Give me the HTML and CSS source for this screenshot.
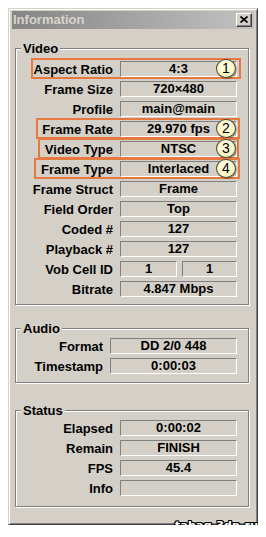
FILE: index.html
```html
<!DOCTYPE html>
<html lang="en">
<head>
    <meta charset="UTF-8">
    <meta name="viewport" content="width=device-width, initial-scale=1.0">
    <title>Information</title>
    <link rel="stylesheet" href="styles.css">
</head>
<body>
    <div class="window">
        <div class="title-bar">
            <span class="title">Information</span>
            <div class="close-btn">
                <svg width="8" height="7" viewBox="0 0 8 7"><path d="M0.5 0.5 L7.5 6.5 M7.5 0.5 L0.5 6.5" stroke="#000" stroke-width="1.6" fill="none"/></svg>
            </div>
        </div>

        <fieldset class="group group-video">
            <legend>Video</legend>
            <div class="row mark m1"><span class="label">Aspect Ratio</span><span class="field">4:3</span><span class="badge">1</span></div>
            <div class="row"><span class="label">Frame Size</span><span class="field">720×480</span></div>
            <div class="row"><span class="label">Profile</span><span class="field">main@main</span></div>
            <div class="row mark m2"><span class="label">Frame Rate</span><span class="field">29.970 fps</span><span class="badge">2</span></div>
            <div class="row mark m3"><span class="label">Video Type</span><span class="field">NTSC</span><span class="badge">3</span></div>
            <div class="row mark m4"><span class="label">Frame Type</span><span class="field">Interlaced</span><span class="badge">4</span></div>
            <div class="row"><span class="label">Frame Struct</span><span class="field">Frame</span></div>
            <div class="row"><span class="label">Field Order</span><span class="field">Top</span></div>
            <div class="row"><span class="label">Coded #</span><span class="field">127</span></div>
            <div class="row"><span class="label">Playback #</span><span class="field">127</span></div>
            <div class="row"><span class="label">Vob Cell ID</span>
                <div class="split"><span class="field">1</span><span class="field">1</span></div>
            </div>
            <div class="row"><span class="label">Bitrate</span><span class="field">4.847 Mbps</span></div>
        </fieldset>

        <fieldset class="group group-audio">
            <legend>Audio</legend>
            <div class="row"><span class="label">Format</span><span class="field">DD 2/0 448</span></div>
            <div class="row"><span class="label">Timestamp</span><span class="field">0:00:03</span></div>
        </fieldset>

        <fieldset class="group group-status">
            <legend>Status</legend>
            <div class="row"><span class="label">Elapsed</span><span class="field">0:00:02</span></div>
            <div class="row"><span class="label">Remain</span><span class="field">FINISH</span></div>
            <div class="row"><span class="label">FPS</span><span class="field">45.4</span></div>
            <div class="row"><span class="label">Info</span><span class="field"></span></div>
        </fieldset>
    </div>
    <div class="watermark">tahag.3dn.ru</div>
</body>
</html>
```

FILE: styles.css
```css
* {
    margin: 0;
    padding: 0;
    box-sizing: border-box;
}
body {
    margin: 8px;
    background-color: #fff;
    font-family: "Liberation Sans", Arial, sans-serif;
    font-size: 13px;
    font-weight: bold;
    color: #000;
    position: relative;
}
.window {
    width: 250px;
    background-color: #d4d0c8;
    border: 1px solid;
    border-color: #d4d0c8 #404040 #404040 #d4d0c8;
    box-shadow: inset 1px 1px 0 #fff, inset -1px -1px 0 #808080;
    padding: 2px 2px 17px 2px;
}
.title-bar {
    height: 18px;
    margin: 0 1px;
    background: linear-gradient(to right, #858585, #c2c2c2);
    display: flex;
    align-items: center;
    justify-content: space-between;
    padding: 0 2px 0 1px;
}
.title {
    color: #d8d4cc;
    line-height: 18px;
}
.close-btn {
    width: 16px;
    height: 14px;
    background-color: #d4d0c8;
    border: 1px solid;
    border-color: #fff #404040 #404040 #fff;
    box-shadow: inset -1px -1px 0 #808080;
    display: flex;
    align-items: center;
    justify-content: center;
}
.close-btn svg {
    display: block;
    margin: 0 1px 1px 0;
}

/* group boxes */
.group {
    margin: 0 6px 0 4px;
    border: 1px solid #808080;
    box-shadow: inset 1px 1px 0 #fff, 1px 1px 0 #fff;
}
.group legend {
    margin-left: 5px;
    padding: 0 2px;
    line-height: 15px;
    background-color: #d4d0c8;
}
.group-video {
    margin-top: 12px;
    padding: 3px 0 5px 0;
}
.group-audio {
    margin-top: 16px;
    padding: 0 0 6px 0;
}
.group-status {
    margin-top: 20px;
    padding: 0 0 8px 0;
}

.row {
    position: relative;
    width: 221px;
    height: 20px;
    display: grid;
    grid-template-columns: 97px 117px;
    column-gap: 7px;
    align-items: center;
}
.group-audio .row {
    grid-template-columns: 87px 127px;
}
.label {
    text-align: right;
    white-space: nowrap;
}
.field {
    height: 16px;
    line-height: 14px;
    text-align: center;
    border: 1px solid;
    border-color: #808080 #fff #fff #808080;
    white-space: nowrap;
}
.split {
    display: grid;
    grid-template-columns: 57px 55px;
    column-gap: 5px;
}

/* annotations */
.mark::before {
    content: '';
    position: absolute;
    top: -1px;
    bottom: 0;
    right: -4px;
    border: 2px solid #e7783f;
}
.m1::before { left: 15px; }
.m2::before { left: 20px; right: -3px; }
.m3::before { left: 22px; right: -2px; }
.m4::before { left: 18px; right: -3px; }
.badge {
    position: absolute;
    right: 1px;
    top: 0;
    width: 20px;
    height: 19px;
    border-radius: 50%;
    border: 1px solid #4a4a3a;
    background: radial-gradient(circle at 40% 35%, #ffffe8, #f7efa8);
    box-shadow: 1px 1px 1px rgba(0, 0, 0, 0.35);
    font-weight: normal;
    font-size: 14px;
    line-height: 17px;
    text-align: center;
}

.watermark {
    position: absolute;
    left: 167px;
    top: 511px;
    font-family: "DejaVu Sans", Verdana, sans-serif;
    font-size: 11px;
    line-height: 14px;
    letter-spacing: 0.2px;
    font-weight: bold;
    color: #fff;
    white-space: nowrap;
    text-shadow: 1px 0 0 #000, -1px 0 0 #000, 0 1px 0 #000, 0 -1px 0 #000,
        1px 1px 0 #000, -1px -1px 0 #000, 1px -1px 0 #000, -1px 1px 0 #000;
}
```
